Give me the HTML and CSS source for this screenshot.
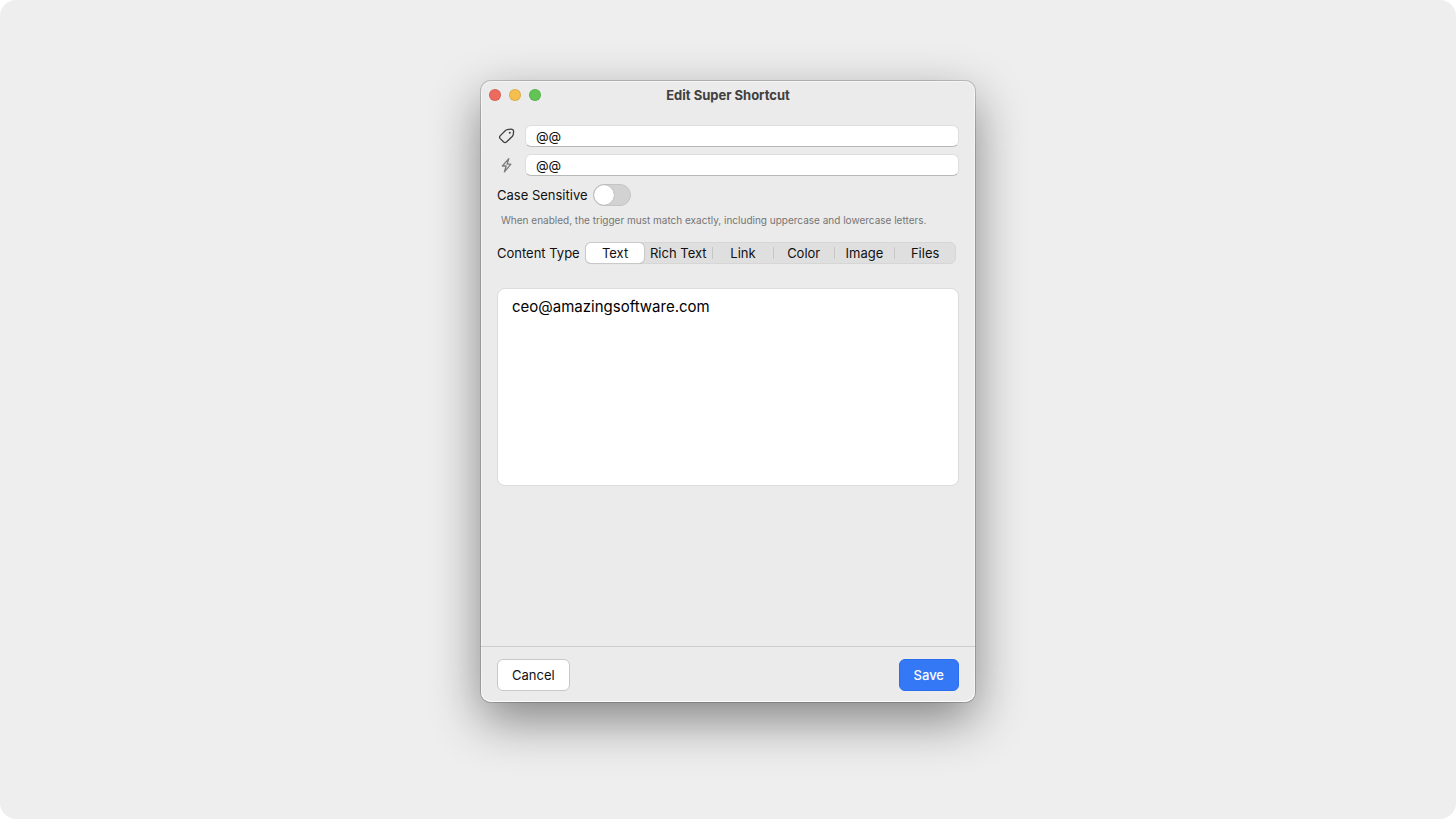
FILE: index.html
```html
<!DOCTYPE html>
<html lang="en">
<head>
<meta charset="utf-8">
<meta name="viewport" content="width=device-width, initial-scale=1">
<title>Edit Super Shortcut</title>
<link rel="stylesheet" href="styles.css">
</head>
<body>
<main class="desktop">
  <form class="window">
    <header class="titlebar">
      <div class="lights">
        <button type="button" class="light light-close" aria-label="Close"></button>
        <button type="button" class="light light-minimize" aria-label="Minimize"></button>
        <button type="button" class="light light-zoom" aria-label="Zoom"></button>
      </div>
      <h1 class="title">Edit Super Shortcut</h1>
    </header>

    <div class="content">
      <div class="fields">
        <div class="field">
          <label class="field-icon" for="name" aria-label="Name">
            <svg class="icon icon-tag" viewBox="0 0 20 20" aria-hidden="true">
              <path d="M10.4 3.7 L13.6 3.1 Q16.7 2.9 16.6 5.8 L16.2 8.6 Q16 9.7 15.2 10.5 L9.4 16 Q8 17.2 6.7 16 L3.2 12.6 Q2 11.3 3.1 9.9 L8.2 4.8 Q9.2 3.9 10.4 3.7 Z"/>
              <circle class="tag-hole" cx="12.8" cy="6.8" r="1"/>
            </svg>
          </label>
          <input class="input" id="name" type="text" value="@@">
        </div>
        <div class="field">
          <label class="field-icon" for="trigger" aria-label="Trigger">
            <svg class="icon icon-bolt" viewBox="0 0 20 20" aria-hidden="true">
              <path d="M11.8 3.6 L5.4 11 H9.2 L7.4 16.8 L13.9 9.2 H10.1 Z"/>
            </svg>
          </label>
          <input class="input" id="trigger" type="text" value="@@">
        </div>
      </div>

      <div class="row">
        <label for="case">Case Sensitive</label>
        <input class="switch" id="case" type="checkbox" role="switch">
      </div>
      <p class="hint">When enabled, the trigger must match exactly, including uppercase and lowercase letters.</p>

      <div class="row type-row" role="radiogroup" aria-labelledby="type-label">
        <span id="type-label">Content Type</span>
        <div class="segments">
          <label class="segment segment-first"><input type="radio" name="type" checked><span>Text</span></label>
          <label class="segment segment-wide"><input type="radio" name="type"><span>Rich Text</span></label>
          <label class="segment"><input type="radio" name="type"><span>Link</span></label>
          <label class="segment"><input type="radio" name="type"><span>Color</span></label>
          <label class="segment"><input type="radio" name="type"><span>Image</span></label>
          <label class="segment"><input type="radio" name="type"><span>Files</span></label>
        </div>
      </div>

      <textarea class="editor" aria-label="Content" spellcheck="false">ceo@amazingsoftware.com</textarea>
    </div>

    <footer class="footer">
      <button type="button" class="button">Cancel</button>
      <button type="submit" class="button button-primary">Save</button>
    </footer>
  </form>
</main>
</body>
</html>
```
FILE: styles.css
```css
* {
  box-sizing: border-box;
}

body {
  margin: 0;
  background: #fff;
  color: #111;
  font: 13px/16px Inter, "Liberation Sans", sans-serif;
}

input,
textarea,
button {
  margin: 0;
  color: inherit;
  font: inherit;
}

.desktop {
  display: flex;
  align-items: center;
  justify-content: center;
  min-height: 100vh;
  padding: 24px 24px 60px;
  border-radius: 16px;
  background: #eee;
}

.window {
  width: 100%;
  max-width: 494px;
  border-radius: 10px;
  background: #ebebeb;
  box-shadow:
    inset 0 0 0 1px rgba(255, 255, 255, 0.5),
    inset 0 -1px 0 rgba(255, 255, 255, 0.7),
    0 0 0 1px rgba(0, 0, 0, 0.18),
    0 18px 50px rgba(0, 0, 0, 0.45);
}

.titlebar {
  display: grid;
  grid-template-columns: 1fr auto 1fr;
  align-items: center;
  height: 28px;
  padding: 0 8px;
}

.lights {
  display: flex;
  gap: 8px;
}

.light {
  width: 12px;
  height: 12px;
  padding: 0;
  border: 1px solid rgba(0, 0, 0, 0.1);
  border-radius: 50%;
}

.light-close {
  background: #ed6a5e;
}

.light-minimize {
  background: #f5bf4f;
}

.light-zoom {
  background: #61c554;
}

.title {
  margin: 0;
  color: #404040;
  font-size: 13px;
  font-weight: 700;
}

.content {
  padding: 16px 16px 160px;
}

.fields {
  display: grid;
  gap: 7px;
  margin-bottom: 8px;
}

.field {
  display: flex;
  align-items: center;
  gap: 8px;
}

.field-icon {
  display: flex;
  width: 20px;
}

.icon {
  width: 20px;
  height: 20px;
  fill: none;
  stroke-linejoin: round;
}

.icon-tag {
  stroke: #404040;
  stroke-width: 1.3;
}

.tag-hole {
  fill: #404040;
  stroke: none;
}

.icon-bolt {
  stroke: #7c7c7c;
  stroke-width: 1.3;
}

.input {
  flex: 1;
  min-width: 0;
  height: 22px;
  padding: 0 10px;
  border: 1px solid #dedede;
  border-bottom-color: #b8b8b8;
  border-radius: 6px;
  outline: 0;
  background: #fff;
}

.row {
  display: flex;
  align-items: center;
  gap: 5px;
}

.switch {
  display: flex;
  align-items: center;
  width: 38px;
  height: 22px;
  border: 1px solid #c4c4c4;
  border-radius: 11px;
  background: #d2d2d2;
  appearance: none;
}

.switch::before {
  width: 20px;
  height: 20px;
  border-radius: 50%;
  background: #fff;
  box-shadow: 0 0 1px rgba(0, 0, 0, 0.4);
  content: "";
}

.switch:checked {
  justify-content: flex-end;
  background: #3478f6;
}

.hint {
  margin: 6px 4px 14px;
  color: #757575;
  font-size: 10px;
}

.type-row {
  padding-right: 3px;
}

.segments {
  display: flex;
  flex: 1;
  height: 22px;
  border: 1px solid #d6d6d6;
  border-radius: 6px;
  background: #dfdfdf;
}

.segment {
  position: relative;
  display: flex;
  flex: 61;
}

.segment-first {
  flex: 59;
}

.segment-wide {
  flex: 68;
}

.segment input {
  position: absolute;
  inset: 0;
  opacity: 0;
}

.segment span {
  flex: 1;
  border-radius: 5px;
  line-height: 20px;
  text-align: center;
  white-space: nowrap;
}

.segment input:checked + span {
  background: #fff;
  box-shadow: 0 0 0 1px #c9c9c9, 0 1px 1px rgba(0, 0, 0, 0.15);
}

.segment:nth-child(n + 3)::before {
  align-self: center;
  width: 1px;
  height: 12px;
  background: #c6c6c6;
  content: "";
}

.editor {
  display: block;
  width: 100%;
  height: 198px;
  margin-top: 24px;
  padding: 8px 14px;
  border: 1px solid #dcdcdc;
  border-radius: 8px;
  outline: 0;
  background: #fff;
  color: #000;
  font-size: 15px;
  line-height: 20px;
  resize: none;
}

.footer {
  display: flex;
  justify-content: space-between;
  padding: 12px 16px 11px;
  border-top: 1px solid #cdcdcd;
}

.button {
  height: 32px;
  padding: 0 14px;
  border: 1px solid #c8c8c8;
  border-radius: 6px;
  background: #fff;
}

.button-primary {
  border-color: #2a6df0;
  background: #3478f6;
  color: #fff;
  font-weight: 500;
}
```
